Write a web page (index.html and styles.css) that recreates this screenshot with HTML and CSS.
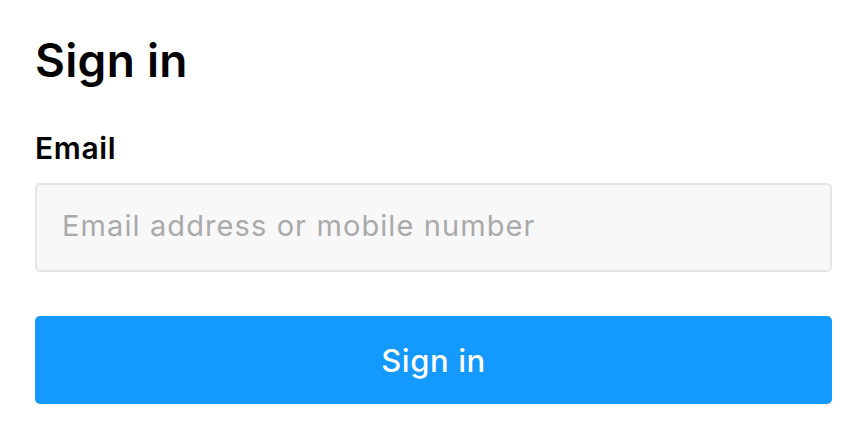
FILE: index.html
```html
<!DOCTYPE html>
<html>
<head>
<meta charset="utf-8">
<link rel="stylesheet" href="styles.css">
</head>
<body>
<main class="signin">
  <h1 class="title">Sign in</h1>
  <label class="label" for="email">Email</label>
  <input class="field" id="email" type="text" placeholder="Email address or mobile number">
  <button class="btn" type="button">Sign in</button>
</main>
</body>
</html>
```
FILE: styles.css
```css
html, body {
  margin: 0;
  padding: 0;
  background: #ffffff;
}
body {
  font-family: Inter, "Noto Sans", sans-serif;
  color: #000;
}
.signin {
  width: 797px;
  margin-left: 35px;
  padding-top: 30px;
  display: flex;
  flex-direction: column;
}
.title {
  margin: 0;
  font-size: 46px;
  font-weight: 600;
  line-height: 60px;
  letter-spacing: 0.3px;
}
.label {
  margin-top: 40px;
  font-size: 30px;
  font-weight: 600;
  line-height: 36px;
  letter-spacing: 0.6px;
}
.field {
  margin-top: 17px;
  box-sizing: border-box;
  height: 89px;
  width: 100%;
  border: 2px solid #e6e6e6;
  border-radius: 5px;
  background: #f8f8f8;
  padding: 0 25px 4px;
  font-family: inherit;
  font-size: 29px;
  letter-spacing: 1.1px;
  color: #000;
  outline: none;
}
.field::placeholder {
  color: #aaaaaa;
}
.btn {
  margin-top: 44px;
  height: 88px;
  width: 100%;
  border: none;
  border-radius: 5px;
  background: #1399ff;
  color: #fff;
  font-family: inherit;
  font-size: 31px;
  font-weight: 500;
  letter-spacing: 0.6px;
}
```
